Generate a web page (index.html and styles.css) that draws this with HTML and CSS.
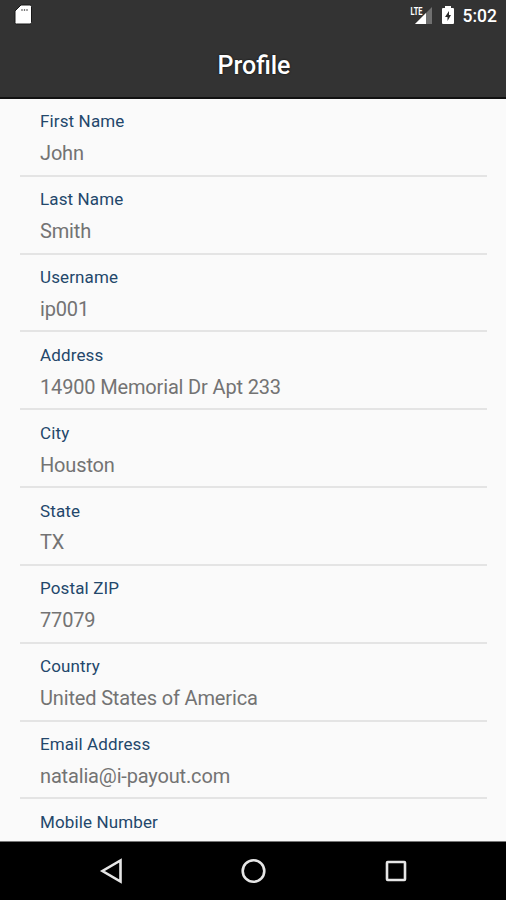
FILE: index.html
```html
<!DOCTYPE html>
<html lang="en">
<head>
<meta charset="utf-8">
<title>Profile</title>
<link rel="stylesheet" href="styles.css">
</head>
<body>
<div class="screen">
  <header class="top">
    <div class="status">
      <svg class="sd" width="18" height="22" viewBox="0 0 18 22"><path d="M7 1h9q1.500 0 1.500 1.500v16q0 1.500-1.500 1.500H2.500Q1 20 1 18.500V7z" fill="#fff" stroke="#181818"/><path d="M8 5v2M10.500 5v2M13 5v2" stroke="#777" stroke-width="1.300"/></svg>
      <div class="indicators">
        <svg class="signal" width="24" height="20" viewBox="0 0 24 20"><path d="M22 2v17H5z" fill="#707070"/><path d="M16 8v11H5z" fill="#fff"/><text x="0.500" y="9.500" class="lte" textLength="12" lengthAdjust="spacingAndGlyphs">LTE</text></svg>
        <svg class="battery" width="14" height="20" viewBox="0 0 14 20"><path d="M4 1h6v2h2q1 0 1 1v14q0 1-1 1H2q-1 0-1-1V4q0-1 1-1h2z" fill="#fff"/><path d="M8 6 4 12h2.500v4L10 10H8z" fill="#292929"/></svg>
        <span class="time">5:02</span>
      </div>
    </div>
    <h1 class="title">Profile</h1>
  </header>
  <main class="fields">
    <div class="field"><div class="label">First Name</div><div class="value">John</div></div>
    <div class="field"><div class="label">Last Name</div><div class="value">Smith</div></div>
    <div class="field"><div class="label">Username</div><div class="value">ip001</div></div>
    <div class="field"><div class="label">Address</div><div class="value">14900 Memorial Dr Apt 233</div></div>
    <div class="field"><div class="label">City</div><div class="value">Houston</div></div>
    <div class="field"><div class="label">State</div><div class="value">TX</div></div>
    <div class="field"><div class="label">Postal ZIP</div><div class="value">77079</div></div>
    <div class="field"><div class="label">Country</div><div class="value">United States of America</div></div>
    <div class="field"><div class="label">Email Address</div><div class="value">natalia@i-payout.com</div></div>
    <div class="field"><div class="label">Mobile Number</div></div>
  </main>
  <nav class="nav">
    <svg width="24" height="26" viewBox="0 0 24 26"><path d="M21.500 2.500v21L3.500 13z"/></svg>
    <svg width="26" height="26" viewBox="0 0 26 26"><circle cx="12.500" cy="13" r="10.800"/></svg>
    <svg width="24" height="26" viewBox="0 0 24 26"><rect x="3" y="4" width="18" height="18" rx=".7"/></svg>
  </nav>
</div>
</body>
</html>
```
FILE: styles.css
```css
* { box-sizing: border-box; }
body { margin: 0; font-family: Roboto, sans-serif; }
.screen {
  width: 506px;
  height: 900px;
  display: flex;
  flex-direction: column;
  overflow: hidden;
  background: #fafafa;
}
.top {
  flex: none;
  height: 99px;
  background: #333;
  border-bottom: 2px solid #111;
  color: #fff;
}
.status {
  height: 32px;
  display: flex;
  justify-content: space-between;
  padding: 0 9px 0 14px;
}
.sd { margin-top: 4px; }
.indicators { display: flex; }
.signal { margin-top: 5px; }
.battery { margin: 5px 8px 0 7px; }
.lte {
  font: 700 10.500px Roboto, sans-serif;
  fill: #fff;
  stroke: #333;
  stroke-width: 1px;
  paint-order: stroke;
}
.time { font-size: 17.500px; font-weight: 500; line-height: 32px; }
.title {
  margin: 0;
  padding-left: 2px;
  text-align: center;
  font-size: 25px;
  font-weight: 500;
  line-height: 68px;
  text-shadow: 0 0 2px #000;
}
.fields {
  flex: 1;
  min-height: 0;
  overflow: hidden;
  padding: 0 19px 0 20px;
}
.field {
  height: 77.830px;
  padding: 11.400px 0 0 20px;
  border-bottom: 2px solid #e4e4e4;
}
.label {
  font-size: 17px;
  letter-spacing: 0.130px;
  line-height: 22px;
  color: #23476b;
}
.value {
  margin-top: 8.800px;
  font-size: 20px;
  letter-spacing: -0.160px;
  line-height: 24px;
  color: #737373;
}
.nav {
  flex: none;
  height: 59px;
  display: flex;
  justify-content: space-between;
  align-items: center;
  padding: 0 98px 0 99px;
  background: #000;
  border-top: 1px solid #777;
}
.nav svg { fill: none; stroke: #e6e6e6; stroke-width: 2.600; }
```
